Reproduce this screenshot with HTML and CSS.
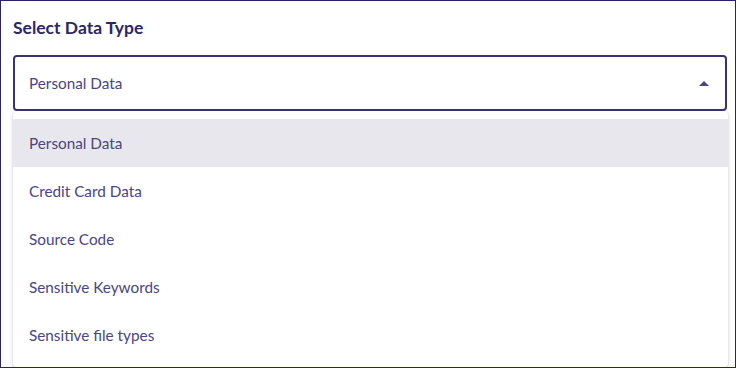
FILE: index.html
```html
<!DOCTYPE html>
<html>
<head>
<meta charset="utf-8">
<link rel="stylesheet" href="styles.css">
</head>
<body>
<div class="frame">
  <div class="title">Select Data Type</div>
  <div class="field">
    <div class="select">
      <span class="value">Personal Data</span>
      <svg class="arrow" width="10" height="5" viewBox="0 0 10 5"><path d="M0 5 L5 0 L10 5 Z" fill="#4b4680"/></svg>
    </div>
    <ul class="menu">
      <li class="item active">Personal Data</li>
      <li class="item">Credit Card Data</li>
      <li class="item">Source Code</li>
      <li class="item">Sensitive Keywords</li>
      <li class="item">Sensitive file types</li>
    </ul>
  </div>
</div>
</body>
</html>
```
FILE: styles.css
```css
* { box-sizing: border-box; }
html, body { margin: 0; padding: 0; background: #fff; }
body { font-family: "Lato", "Open Sans", sans-serif; }
.frame {
  width: 736px;
  height: 368px;
  border: 1px solid #2a2462;
  padding: 16px 8px 0 12px;
  overflow: hidden;
  background: #fff;
}
.title {
  font-size: 17.5px;
  font-weight: 700;
  color: #2b2860;
  line-height: 22px;
  height: 22px;
}
.field {
  position: relative;
  margin-top: 16px;
}
.select {
  height: 56px;
  border: 2px solid #3a336f;
  border-radius: 4px;
  display: flex;
  align-items: center;
  justify-content: space-between;
  padding: 0 16px 0 14px;
}
.value {
  font-size: 15.3px;
  color: #4a4580;
}
.arrow { display: block; margin-right: 0; }
.menu {
  position: absolute;
  left: 0;
  right: -1px;
  top: 56px;
  margin: 0;
  padding: 8px 0;
  list-style: none;
  background: #fff;
  border-radius: 4px;
  box-shadow: 0 2px 4px rgba(40, 36, 90, 0.18), 0 0 2px rgba(40, 36, 90, 0.12);
}
.item {
  height: 48px;
  display: flex;
  align-items: center;
  padding-left: 16px;
  font-size: 15.3px;
  color: #4a4580;
}
.item.active { background: #e8e7ee; }
```
